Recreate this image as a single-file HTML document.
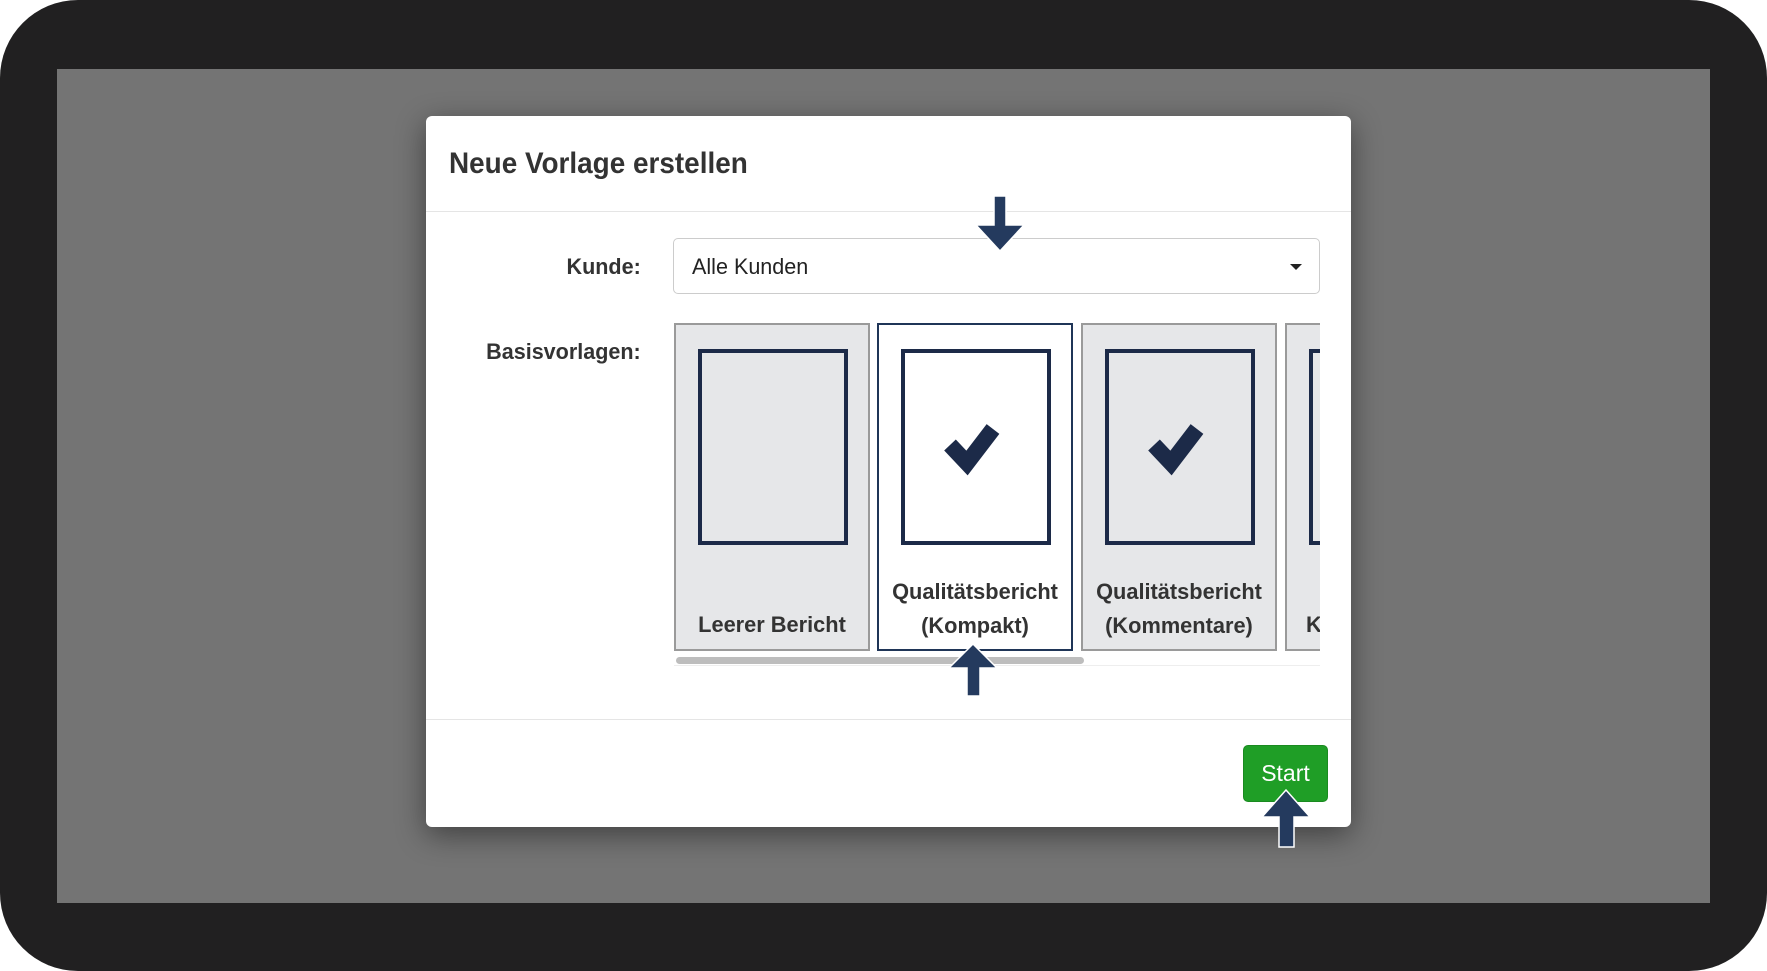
<!DOCTYPE html>
<html><head><meta charset="utf-8"><style>
*{margin:0;padding:0;box-sizing:border-box}
body{width:1767px;height:971px;background:#fff;position:relative;overflow:hidden;font-family:"Liberation Sans",Arial,sans-serif}
.frame{position:absolute;left:0;top:0;width:1767px;height:971px;background:#212021;border-radius:78px}
.gray{position:absolute;left:57px;top:69px;width:1653px;height:834px;background:#747474}
.modal{position:absolute;left:426px;top:116px;width:925px;height:711px;background:#fff;border-radius:6px;box-shadow:0 8px 30px rgba(0,0,0,.45)}
.abs{position:absolute}
.t{white-space:nowrap;transform-origin:left center;display:inline-block}
.card{position:absolute;top:207px;height:328px;width:196px;background:#e6e7e9;border:2px solid #9a9a9a}
.card.sel{background:#fff;border:2px solid #1f3557}
.doc{position:absolute;left:22px;top:24px;width:150px;height:196px;border:4px solid #1c2a48}
.lbl{position:absolute;left:-20px;right:-20px;text-align:center;font-weight:bold;font-size:22px;color:#333;line-height:34px;transform:scaleX(.99)}
</style></head><body>
<div class="frame"></div>
<div class="gray"></div>
<div class="modal">
  <div class="abs" style="left:23px;top:31px;font-size:30px;font-weight:bold;color:#333"><span class="t" style="transform:scaleX(.93)">Neue Vorlage erstellen</span></div>
  <div class="abs" style="left:0;right:0;top:95px;height:1px;background:#e5e5e5"></div>
  <div class="abs" style="left:100px;width:115px;top:138px;text-align:right;font-size:22px;font-weight:bold;color:#333"><span class="t" style="transform:scaleX(.98);transform-origin:right center">Kunde:</span></div>
  <div class="abs" style="left:247px;top:122px;width:647px;height:56px;border:1px solid #ccc;border-radius:5px"></div>
  <div class="abs" style="left:266px;top:138px;font-size:22px;color:#222"><span class="t" style="transform:scaleX(.98)">Alle Kunden</span></div>
  <div class="abs" style="left:864px;top:148px;width:0;height:0;border-left:6px solid transparent;border-right:6px solid transparent;border-top:6px solid #222"></div>
  <div class="abs" style="left:20px;width:195px;top:223px;text-align:right;font-size:22px;font-weight:bold;color:#333"><span class="t" style="transform:scaleX(.98);transform-origin:right center">Basisvorlagen:</span></div>
  <div class="abs" style="left:248px;top:207px;width:646px;height:345px;overflow:hidden">
    <div class="card" style="left:0;top:0"><div class="doc"></div><div class="lbl" style="top:283px">Leerer Bericht</div></div>
    <div class="card sel" style="left:203px;top:0"><div class="doc"><svg width="142" height="188" viewBox="0 0 142 188"><path d="M45 92 L62 110 L88 76" fill="none" stroke="#1c2a48" stroke-width="16" stroke-linecap="butt"/></svg></div><div class="lbl" style="top:250px">Qualitätsbericht<br>(Kompakt)</div></div>
    <div class="card" style="left:407px;top:0"><div class="doc"><svg width="142" height="188" viewBox="0 0 142 188"><path d="M45 92 L62 110 L88 76" fill="none" stroke="#1c2a48" stroke-width="16"/></svg></div><div class="lbl" style="top:250px">Qualitätsbericht<br>(Kommentare)</div></div>
    <div class="card" style="left:611px;top:0"><div class="doc"></div><div class="lbl" style="top:283px;text-align:left;left:18px">K</div></div>
    <div class="abs" style="left:0;right:0;top:342px;height:1px;background:#eee"></div>
    <div class="abs" style="left:2px;width:408px;top:334px;height:7px;border-radius:4px;background:#bdbdbd"></div>
  </div>
  <div class="abs" style="left:0;right:0;top:603px;height:1px;background:#e5e5e5"></div>
  <div class="abs" style="left:817px;top:629px;width:85px;height:57px;background:#1f9e26;border-radius:5px;border:1px solid #1a8a20;color:#fff;font-size:23px;text-align:center;line-height:55px"><span class="t" style="transform-origin:center">Start</span></div>
</div>
<svg class="abs" style="left:0;top:0" width="1767" height="971">
  <g fill="#243a5e" stroke="#fff" stroke-width="1.5">
    <path d="M994 196 H1006 V225 H1024 L1000 251 L976 225 H994 Z"/>
    <path d="M967 696 H980 V668 H997 L973 644 L949 668 H967 Z"/>
    <path d="M1279 847 H1294 V817 H1310 L1286 790 L1262 817 H1279 Z"/>
  </g>
</svg>
</body></html>
